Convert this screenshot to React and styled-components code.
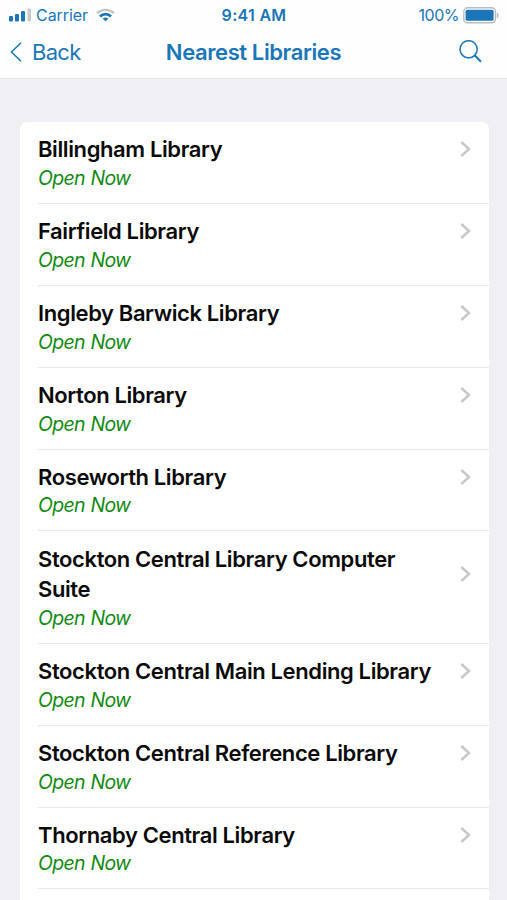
import React from 'react';
import styled, { createGlobalStyle } from 'styled-components';

const GlobalStyle = createGlobalStyle`
  * {
    box-sizing: border-box;
  }
  body {
    margin: 0;
    background: #efeff4;
    font-family: Inter, 'Liberation Sans', sans-serif;
  }
`;

const Screen = styled.div`
  height: 900px;
  overflow: hidden;
  background: #efeff4;
`;

const Header = styled.header`
  height: 79px;
  background: #fefefe;
  border-bottom: 1px solid #e4e4e6;
  color: #1a76b8;
`;

const StatusBar = styled.div`
  display: grid;
  grid-template-columns: 1fr auto 1fr;
  align-items: center;
  height: 30px;
  padding: 0 8px 0 9px;
  font-size: 16px;
  line-height: 30px;
`;

const StatusGroup = styled.div`
  display: flex;
  align-items: center;
  justify-content: ${({ $end }) => ($end ? 'flex-end' : 'flex-start')};
`;

const Carrier = styled.span`
  margin: 0 8px 0 5px;
  letter-spacing: -0.05px;
`;

const Time = styled.span`
  font-weight: 600;
  letter-spacing: 0.3px;
`;

const Percent = styled.span`
  margin-right: 4px;
  letter-spacing: -0.5px;
`;

const NavBar = styled.nav`
  display: grid;
  grid-template-columns: 1fr auto 1fr;
  align-items: center;
  height: 43px;
  padding: 0 10px;
`;

const BackButton = styled.button`
  display: flex;
  align-items: center;
  gap: 10px;
  padding: 0;
  border: none;
  background: none;
  color: inherit;
  font: inherit;
  font-size: 22px;
  letter-spacing: -0.7px;
`;

const NavTitle = styled.h1`
  margin: 0;
  font-size: 22px;
  font-weight: 600;
  letter-spacing: -0.4px;
`;

const SearchButton = styled.button`
  display: flex;
  justify-self: end;
  margin-right: 15px;
  padding: 0;
  border: none;
  background: none;
  color: inherit;
`;

const List = styled.ul`
  list-style: none;
  margin: 43px 18px 0 19.5px;
  padding: 0;
  border-radius: 7px 7px 0 0;
  background: #fff;
`;

const Row = styled.li`
  margin-left: 18.5px;
  padding: 12.4px 18px 10.4px 0;
  border-bottom: 1px solid #e9e9ec;
`;

const RowTop = styled.div`
  display: flex;
  align-items: center;
  justify-content: space-between;
`;

const Name = styled.div`
  width: 400px;
  font-size: 22px;
  font-weight: 600;
  line-height: 30.5px;
  letter-spacing: -0.39px;
  color: #0a0a0a;
`;

const Status = styled.div`
  font-size: 19.5px;
  font-style: italic;
  line-height: 27.6px;
  letter-spacing: -0.7px;
  word-spacing: 0.8px;
  color: #138a13;
`;

const libraries = [
  'Billingham Library',
  'Fairfield Library',
  'Ingleby Barwick Library',
  'Norton Library',
  'Roseworth Library',
  'Stockton Central Library Computer Suite',
  'Stockton Central Main Lending Library',
  'Stockton Central Reference Library',
  'Thornaby Central Library',
];

const SignalIcon = () => (
  <svg width="22" height="14" viewBox="0 0 22 14" fill="currentColor">
    <rect x="0" y="8" width="4" height="5.5" rx="1" />
    <rect x="6" y="6" width="4" height="7.5" rx="1" />
    <rect x="12" y="3" width="4" height="10.5" rx="1" />
    <rect x="18.5" y="0.5" width="3.5" height="13" rx="1" fill="#c9c9ce" />
  </svg>
);

const WifiIcon = () => (
  <svg width="19" height="14" viewBox="0 0 19 14" fill="none" strokeWidth="2.4">
    <path d="M1 5.2C5.7 0.7 13.3 0.7 18 5.2" stroke="#c4c4c8" />
    <path d="M4 8.4C7.2 5.3 11.8 5.3 15 8.4" stroke="currentColor" strokeWidth="2.8" />
    <path d="M9.5 13.2L6.6 10.6C8.3 9.2 10.7 9.2 12.4 10.6Z" fill="currentColor" />
  </svg>
);

const BatteryIcon = () => (
  <svg width="36" height="17" viewBox="0 0 36 17">
    <rect x="0.8" y="0.8" width="31.6" height="15" rx="3.8" fill="#fff" stroke="#b9bcc1" strokeWidth="1.4" />
    <rect x="2.6" y="2.8" width="28" height="11" rx="1.5" fill="#1a76b8" />
    <path d="M33.8 5.6C36.2 6.4 36.2 10.4 33.8 11.2Z" fill="#b9bcc1" />
  </svg>
);

const BackIcon = () => (
  <svg width="12" height="20" viewBox="0 0 12 20" fill="none" stroke="currentColor" strokeWidth="1.5">
    <path d="M11 0.7L1.5 10L11 19.3" />
  </svg>
);

const SearchIcon = () => (
  <svg width="23" height="23" viewBox="0 0 23 23" fill="none" stroke="currentColor">
    <circle cx="9.6" cy="9.3" r="8.6" strokeWidth="1.5" />
    <path d="M15.6 15.3L22 21.8" strokeWidth="2" />
  </svg>
);

const Chevron = () => (
  <svg width="11" height="17" viewBox="0 0 11 17" fill="none" stroke="#c7c7cb" strokeWidth="2.4">
    <path d="M1.3 1L9 8L1.3 15" />
  </svg>
);

export default function App() {
  return (
    <Screen>
      <GlobalStyle />
      <Header>
        <StatusBar>
          <StatusGroup>
            <SignalIcon />
            <Carrier>Carrier</Carrier>
            <WifiIcon />
          </StatusGroup>
          <Time>9:41 AM</Time>
          <StatusGroup $end>
            <Percent>100%</Percent>
            <BatteryIcon />
          </StatusGroup>
        </StatusBar>
        <NavBar>
          <BackButton>
            <BackIcon />
            Back
          </BackButton>
          <NavTitle>Nearest Libraries</NavTitle>
          <SearchButton aria-label="Search">
            <SearchIcon />
          </SearchButton>
        </NavBar>
      </Header>
      <List>
        {libraries.map((name) => (
          <Row key={name}>
            <RowTop>
              <Name>{name}</Name>
              <Chevron />
            </RowTop>
            <Status>Open Now</Status>
          </Row>
        ))}
        <Row />
      </List>
    </Screen>
  );
}
